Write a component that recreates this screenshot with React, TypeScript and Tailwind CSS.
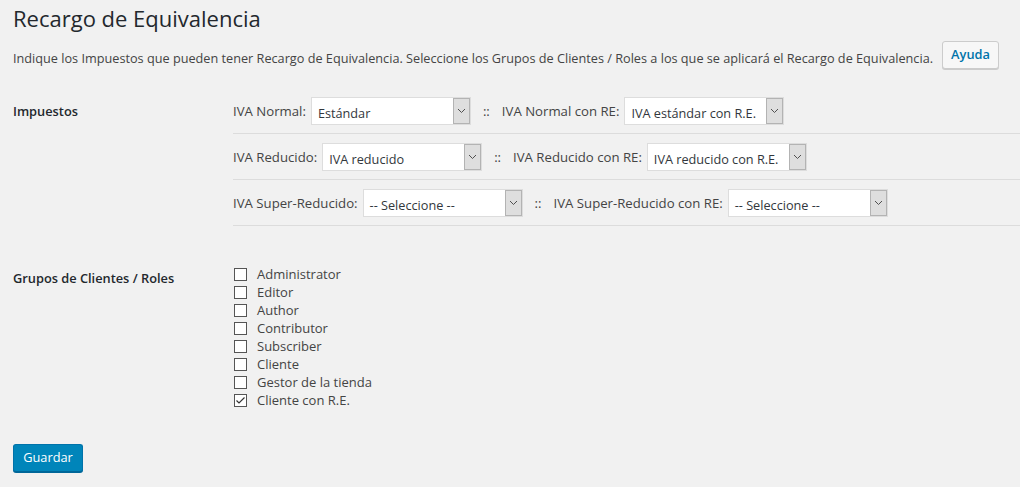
import React from "react";

function Chevron() {
  return (
    <svg width="9" height="6" viewBox="0 0 9 6" fill="none">
      <polyline points="1,1 4.5,4.5 8,1" stroke="#505050" strokeWidth="1" />
    </svg>
  );
}

function Select({ value }: { value: string }) {
  return (
    <div className="ml-[5px] flex h-[28px] w-[160px] shrink-0 border border-[#dddddd] bg-white">
      <span className="flex-1 overflow-hidden whitespace-nowrap pl-[6px] pt-[2px] text-[12.7px] leading-[26px] text-[#32373c]">
        {value}
      </span>
      <span className="flex h-[26px] w-[17px] items-center justify-center border border-[#b3b3b3] bg-[#dedede]">
        <Chevron />
      </span>
    </div>
  );
}

function TaxRow({
  l1,
  v1,
  l2,
  v2,
}: {
  l1: string;
  v1: string;
  l2: string;
  v2: string;
}) {
  return (
    <div className="flex items-center border-b border-[#dcdcdc] pb-[8px] pt-[9px]">
      <span className="whitespace-nowrap text-[13.2px] leading-[18px] text-[#444]">{l1}</span>
      <Select value={v1} />
      <span className="ml-[12px] text-[13.2px] leading-[18px] text-[#444]">::</span>
      <span className="ml-[12px] whitespace-nowrap text-[13.2px] leading-[18px] text-[#444]">{l2}</span>
      <Select value={v2} />
    </div>
  );
}

function Check({ label, checked }: { label: string; checked?: boolean }) {
  return (
    <div className="flex h-[18px] items-center">
      <span className="ml-[1px] flex h-[13px] w-[13px] items-center justify-center border border-[#555] bg-white">
        {checked && (
          <svg width="11" height="11" viewBox="0 0 11 11" fill="none">
            <polyline points="1.5,5.5 4,8 9.5,2.5" stroke="#333" strokeWidth="1.2" />
          </svg>
        )}
      </span>
      <span className="ml-[10px] text-[13px] leading-[18px] text-[#444]">{label}</span>
    </div>
  );
}

export default function App() {
  const roles = [
    "Administrator",
    "Editor",
    "Author",
    "Contributor",
    "Subscriber",
    "Cliente",
    "Gestor de la tienda",
  ];
  return (
    <div className="min-h-[487px] w-full bg-[#f1f1f1] pl-[13px] font-['Open_Sans',sans-serif] text-[#444]">
      <h1 className="pt-[4px] text-[22px] font-normal leading-[29px] text-[#23282d]">
        Recargo de Equivalencia
      </h1>
      <div className="mt-[8px] flex items-start">
        <p className="mt-[8px] whitespace-nowrap text-[12.7px] leading-[18px] text-[#444]">
          Indique los Impuestos que pueden tener Recargo de Equivalencia. Seleccione los Grupos de
          Clientes / Roles a los que se aplicará el Recargo de Equivalencia.
        </p>
        <button className="ml-[9px] flex h-[28px] w-[57px] items-center justify-center rounded-[3px] border border-[#cccccc] bg-[#f7f7f7] text-[12.8px] font-semibold text-[#0073aa] shadow-[0_1px_0_#cccccc]">
          Ayuda
        </button>
      </div>

      <div className="mt-[19px] flex">
        <div className="w-[220px] shrink-0 pt-[14px] text-[12.8px] font-semibold leading-[18px] text-[#23282d]">
          Impuestos
        </div>
        <div className="flex-1">
          <TaxRow
            l1="IVA Normal:"
            v1="Estándar"
            l2="IVA Normal con RE:"
            v2="IVA estándar con R.E."
          />
          <TaxRow
            l1="IVA Reducido:"
            v1="IVA reducido"
            l2="IVA Reducido con RE:"
            v2="IVA reducido con R.E."
          />
          <TaxRow
            l1="IVA Super-Reducido:"
            v1="-- Seleccione --"
            l2="IVA Super-Reducido con RE:"
            v2="-- Seleccione --"
          />
        </div>
      </div>

      <div className="mt-[39px] flex">
        <div className="w-[220px] shrink-0 pt-[4px] text-[12.8px] font-semibold leading-[18px] text-[#23282d]">
          Grupos de Clientes / Roles
        </div>
        <div className="flex flex-col">
          {roles.map((r) => (
            <Check key={r} label={r} />
          ))}
          <Check label="Cliente con R.E." checked />
        </div>
      </div>

      <button className="mt-[35px] flex h-[28px] w-[70px] items-center justify-center rounded-[3px] border border-[#0073aa] border-b-[#006799] bg-[#0085ba] text-[12.8px] text-white shadow-[0_1px_0_#006799]">
        Guardar
      </button>
      <div className="h-[14px]" />
    </div>
  );
}
